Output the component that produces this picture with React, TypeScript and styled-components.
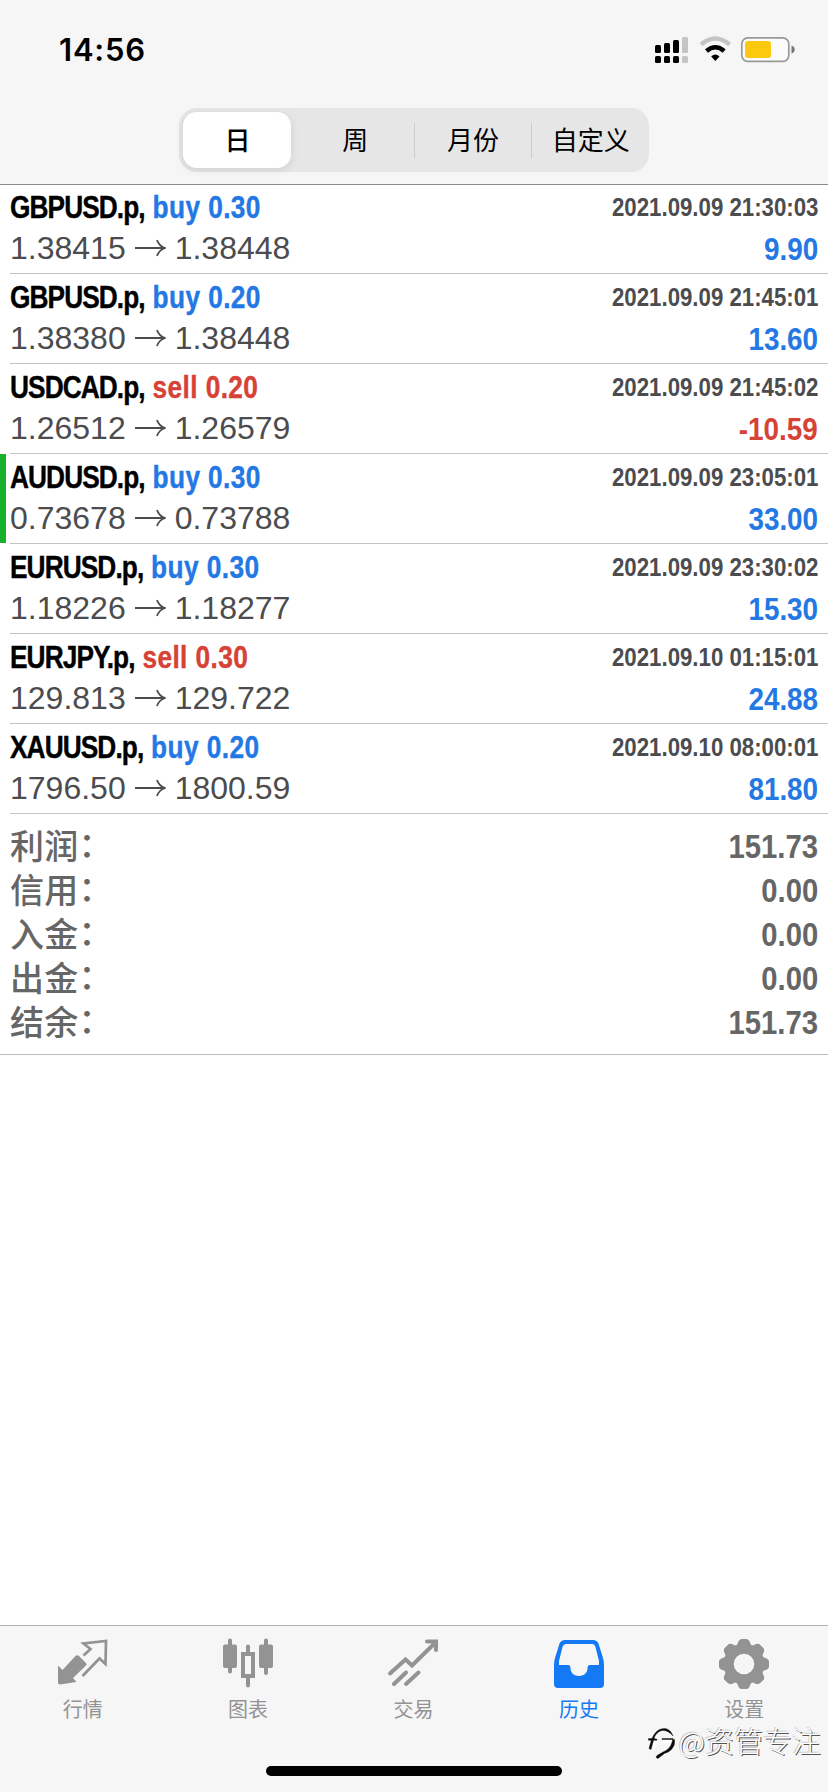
import React from 'react';
import styled, { createGlobalStyle } from 'styled-components';

const GlobalStyle = createGlobalStyle`
  * { box-sizing: border-box; }
  body { margin: 0; background: #fff; }
`;

const cjk = `"Noto Sans CJK SC", sans-serif`;
const sans = `"Liberation Sans", ${cjk}`;
const BLUE = '#2478e4';
const RED = '#d64236';

const Screen = styled.div`
  width: 828px;
  height: 1792px;
  display: flex;
  flex-direction: column;
  background: #fff;
  overflow: hidden;
  font-family: ${sans};
`;

const Header = styled.header`
  height: 184px;
  flex: none;
  display: flex;
  flex-direction: column;
  align-items: center;
  background: #f6f6f6;
  box-shadow: 0 1px 0 #8c8c8c;
  position: relative;
`;

const StatusBar = styled.div`
  width: 100%;
  height: 108px;
  flex: none;
  display: flex;
  justify-content: space-between;
  align-items: flex-start;
  padding: 30px 33px 0 59px;
`;

const Clock = styled.time`
  font: 600 31px/39px Inter, sans-serif;
  letter-spacing: 0.8px;
  color: #000;
`;

const StatusIcons = styled.svg`
  width: 142px;
  height: 30px;
  margin-top: 5px;
`;

const Segmented = styled.nav`
  width: 470px;
  height: 64px;
  flex: none;
  display: flex;
  align-items: center;
  padding: 4px 0 4px 4px;
  border-radius: 18px;
  background: #e6e6e7;
`;

const Segment = styled.button<{ $active?: boolean; $divided?: boolean }>`
  flex: ${p => (p.$active ? '0 0 108px' : '1 1 0')};
  height: ${p => (p.$active ? '56px' : '35px')};
  padding: 0 0 ${p => (p.$active ? '3px' : '5px')};
  margin-right: ${p => (p.$active ? '5px' : '0')};
  border: 0;
  border-left: 1px solid ${p => (p.$divided ? '#cbcbcd' : 'transparent')};
  border-radius: ${p => (p.$active ? '14px' : '0')};
  background: ${p => (p.$active ? '#fff' : 'transparent')};
  box-shadow: ${p => (p.$active ? '0 2px 8px rgba(0, 0, 0, 0.1)' : 'none')};
  font: ${p => (p.$active ? 500 : 400)} 26px/32px ${cjk};
  color: #000;
  white-space: nowrap;
`;

const Deals = styled.main`
  flex: none;
`;

const Deal = styled.article<{ $closedByTarget?: boolean }>`
  height: 90px;
  display: flex;
  justify-content: space-between;
  padding: 5px 10px 0;
  background:
    linear-gradient(#c3c3c3, #c3c3c3) 10px 89px / 100% 1px no-repeat,
    linear-gradient(#17b12b, #17b12b) 0 0 / ${p => (p.$closedByTarget ? '6px 89px' : '0 0')} no-repeat;
`;

const DealSide = styled.div<{ $end?: boolean }>`
  display: flex;
  flex-direction: column;
  align-items: ${p => (p.$end ? 'flex-end' : 'flex-start')};
`;

const DealTitle = styled.div`
  height: 41px;
  display: flex;
  font: 700 32px/36px ${sans};
  -webkit-text-stroke: 0.4px currentColor;
  white-space: pre;
  transform: scaleX(0.82);
  transform-origin: left;
`;

const Symbol = styled.span`
  letter-spacing: -1.1px;
  color: #000;
`;

const Operation = styled.span<{ $color: string }>`
  margin-left: 9.5px;
  letter-spacing: 0.5px;
  color: ${p => p.$color};
  -webkit-text-stroke-color: ${p => p.$color};
`;

const Prices = styled.div`
  display: flex;
  align-items: center;
  font-size: 32px;
  line-height: 36px;
  color: #4c4c4e;
`;

const Arrow = styled.svg`
  width: 31px;
  height: 18px;
  margin: 0 9px;
`;

const DateTime = styled.time`
  height: 42px;
  font: 700 26px/36px ${sans};
  transform: scaleX(0.855);
  transform-origin: right;
  color: #4c4c4e;
`;

const Profit = styled.span<{ $color: string }>`
  font: 700 32px/36px ${sans};
  transform: scaleX(0.87);
  transform-origin: right;
  color: ${p => p.$color};
`;

const Summary = styled.dl`
  height: 241px;
  flex: none;
  margin: 0;
  padding: 9px 10px 0;
  border-bottom: 1px solid #bdbdbd;
`;

const SummaryRow = styled.div`
  height: 44px;
  display: flex;
  justify-content: space-between;
`;

const SummaryLabel = styled.dt`
  display: flex;
  font: 500 34px/44px ${cjk};
  letter-spacing: 0.2px;
  color: #666;
`;

const Colon = styled.span`
  margin: -2px 0 2px;
`;

const SummaryValue = styled.dd`
  margin: 0;
  font: 700 34px/46px ${sans};
  transform: scaleX(0.86);
  transform-origin: right;
  color: #666;
`;

const Footer = styled.footer`
  height: 167px;
  flex: none;
  margin-top: auto;
  position: relative;
  display: flex;
  flex-direction: column;
  align-items: center;
  justify-content: space-between;
  padding-bottom: 16px;
  border-top: 1px solid #b1b1b1;
  background: #f6f6f6;
`;

const Tabs = styled.nav`
  width: 100%;
  padding-right: 1px;
  display: grid;
  grid-template-columns: repeat(5, 1fr);
`;

const Tab = styled.a<{ $active?: boolean }>`
  display: flex;
  flex-direction: column;
  align-items: center;
  padding-top: 11px;
  color: ${p => (p.$active ? '#1479f5' : '#939393')};
  font: 400 20px/28px ${cjk};

  svg {
    width: 54px;
    height: 54px;
    margin-bottom: 4px;
  }
`;

const HomeIndicator = styled.div`
  width: 296px;
  height: 10px;
  border-radius: 5px;
  background: #000;
`;

const Watermark = styled.div`
  position: absolute;
  right: 7px;
  top: 94px;
  display: flex;
  align-items: center;
  font: 300 29px/40px ${cjk};
  color: #fff;
  text-shadow: 1px 1px 0 #555, -1px -1px 0 #ccc;

  svg {
    width: 28px;
    height: 34px;
    margin: 6px 3px 0 0;
  }
`;

const QuotesIcon = () => (
  <svg viewBox="0 0 54 54">
    <path fill="currentColor" d="M2 28.500 6.500 33 19 19.500Q21 17.500 23 19L30 26Q31 27.500 30 28.500L17 41 20.500 45 4 47.500Q2 47.500 2 45.500Z" />
    <path fill="none" stroke="currentColor" strokeWidth="2.700" d="M27.500 18.500 34.500 12 27.500 6.500 50 4 49.500 27 43.500 21.500 26.500 39" />
  </svg>
);

const ChartIcon = () => (
  <svg viewBox="0 0 54 54">
    <g fill="none" stroke="currentColor" strokeWidth="4" strokeLinecap="round">
      <path d="M9 3.500V34.500M45 3.500V36M27 9.500V17M27 41V48.500" />
      <rect x="22" y="17" width="10" height="22" />
    </g>
    <rect x="2" y="7.500" width="14" height="23.500" rx="2" fill="currentColor" />
    <rect x="38" y="7.500" width="14" height="23.500" rx="2" fill="currentColor" />
  </svg>
);

const TradeIcon = () => (
  <svg viewBox="0 0 54 54" fill="none" stroke="currentColor" strokeWidth="4" strokeLinecap="round">
    <path d="M4 36.500 19.500 22.500 26 28.500 49 6" />
    <path d="M41 4.500H50V13" />
    <path d="M8 47 20 35.500M20 47 32.500 35.500" />
  </svg>
);

const HistoryIcon = () => (
  <svg viewBox="0 0 54 54" fill="currentColor" fillRule="evenodd">
    <path d="M13 3H41Q45 3 46.500 6.500L51 21Q52 24 52 28V47Q52 51 48 51H6Q2 51 2 47V28Q2 24 3 21L7.500 6.500Q9 3 13 3ZM14 7Q11.500 7 10.500 10L7 24V28H16Q18.500 28 18.500 31C18.500 35 21 39 27 39S35.500 35 35.500 31Q35.500 28 38 28H47V24L43.500 10Q42.500 7 40 7Z" />
  </svg>
);

const SettingsIcon = () => (
  <svg viewBox="0 0 54 54">
    <g fill="currentColor">
      {[0, 45, 90, 135].map(angle => (
        <path
          key={angle}
          transform={`rotate(${angle} 27 27)`}
          d="M17.500 9Q20.500 8.500 21 5.500Q22 2 25 2H29Q32 2 33 5.500Q33.500 8.500 36.500 9V45Q33.500 45.500 33 48.500Q32 52 29 52H25Q22 52 21 48.500Q20.500 45.500 17.500 45Z"
        />
      ))}
    </g>
    <circle cx="27" cy="27" r="10.300" fill="#f6f6f6" />
  </svg>
);

const WatermarkLogo = () => (
  <svg viewBox="0 0 28 34" fill="none">
    <path stroke="#fff" strokeWidth="4" d="M3 15H10M10 9 5 22M10 7Q17 1 23 8M24 18Q20 27 10 30M15 15H25" />
    <g fill="#0a0a0a" stroke="#0a0a0a" strokeWidth="0.400">
      <path d="M0.500 12.500 4 12.500Q7 5 13 3Q19 1 23 6L25 10Q20 4 14 4.500Q8 6 6 12.500L9 13.200V14.200H5.500L3 23.500 1 22.500 3.300 14.200H0.500Z" />
      <path d="M26.500 13.500Q27.500 19 23.500 23.500Q20.500 26.500 16.500 27.500L10 32.500 8 31.500 9 29.500 15 26Q21 23.500 23 19Q24.500 16 24.500 13.500Z" />
      <path d="M14 12.500H25V13.500H14Z" />
    </g>
  </svg>
);

const deals = [
  { symbol: 'GBPUSD.p', side: 'buy', volume: '0.30', open: '1.38415', close: '1.38448', time: '2021.09.09 21:30:03', profit: '9.90' },
  { symbol: 'GBPUSD.p', side: 'buy', volume: '0.20', open: '1.38380', close: '1.38448', time: '2021.09.09 21:45:01', profit: '13.60' },
  { symbol: 'USDCAD.p', side: 'sell', volume: '0.20', open: '1.26512', close: '1.26579', time: '2021.09.09 21:45:02', profit: '-10.59' },
  { symbol: 'AUDUSD.p', side: 'buy', volume: '0.30', open: '0.73678', close: '0.73788', time: '2021.09.09 23:05:01', profit: '33.00', target: true },
  { symbol: 'EURUSD.p', side: 'buy', volume: '0.30', open: '1.18226', close: '1.18277', time: '2021.09.09 23:30:02', profit: '15.30' },
  { symbol: 'EURJPY.p', side: 'sell', volume: '0.30', open: '129.813', close: '129.722', time: '2021.09.10 01:15:01', profit: '24.88' },
  { symbol: 'XAUUSD.p', side: 'buy', volume: '0.20', open: '1796.50', close: '1800.59', time: '2021.09.10 08:00:01', profit: '81.80' },
];

const totals = [
  ['利润', '151.73'],
  ['信用', '0.00'],
  ['入金', '0.00'],
  ['出金', '0.00'],
  ['结余', '151.73'],
];

const tabs = [
  { label: '行情', Icon: QuotesIcon },
  { label: '图表', Icon: ChartIcon },
  { label: '交易', Icon: TradeIcon },
  { label: '历史', Icon: HistoryIcon, active: true },
  { label: '设置', Icon: SettingsIcon },
];

export default function App() {
  return (
    <Screen>
      <GlobalStyle />
      <Header>
        <StatusBar>
          <Clock>14:56</Clock>
          <StatusIcons viewBox="0 0 142 30">
            <g fill="#000">
              <rect x="2" y="10" width="6" height="8" rx="1.500" />
              <rect x="11" y="8" width="6" height="10" rx="1.500" />
              <rect x="20" y="5" width="6" height="13" rx="1.500" />
              <rect x="2" y="21" width="6" height="7" rx="1.500" />
              <rect x="11" y="21" width="6" height="7" rx="1.500" />
              <rect x="20" y="21" width="6" height="7" rx="1.500" />
            </g>
            <rect x="29" y="2" width="6" height="16" rx="1.500" fill="#c4c4c4" />
            <rect x="29" y="21" width="6" height="7" rx="1.500" fill="#c4c4c4" />
            <path d="M48 9.500Q62.300-2.500 76.600 9.500" fill="none" stroke="#c4c4c4" strokeWidth="4.500" />
            <path d="M53.500 16Q62.300 8.500 71.200 16" fill="none" stroke="#000" strokeWidth="4.500" />
            <path d="M58.200 21.500Q62.300 17.500 66.500 21.500L62.300 26Z" fill="#000" />
            <rect x="88.800" y="2.800" width="47" height="23.500" rx="6" fill="#fbfbfb" stroke="#999" strokeWidth="1.700" />
            <rect x="92" y="6" width="26" height="17" rx="3" fill="#fdc90f" />
            <path d="M138.500 10.500Q141.700 11.500 141.700 14.500T138.500 18.500Z" fill="#777" />
          </StatusIcons>
        </StatusBar>
        <Segmented>
          <Segment $active>日</Segment>
          <Segment>周</Segment>
          <Segment $divided>月份</Segment>
          <Segment $divided>自定义</Segment>
        </Segmented>
      </Header>

      <Deals>
        {deals.map(d => (
          <Deal key={d.time} $closedByTarget={d.target}>
            <DealSide>
              <DealTitle>
                <Symbol>{d.symbol},</Symbol>
                <Operation $color={d.side === 'buy' ? BLUE : RED}>{d.side} {d.volume}</Operation>
              </DealTitle>
              <Prices>
                {d.open}
                <Arrow viewBox="0 0 31 18" fill="none" stroke="currentColor" strokeWidth="1.800">
                  <path d="M0 9H29.500M22 1Q24 7 30 9Q24 11 22 17" />
                </Arrow>
                {d.close}
              </Prices>
            </DealSide>
            <DealSide $end>
              <DateTime>{d.time}</DateTime>
              <Profit $color={d.profit.startsWith('-') ? RED : BLUE}>{d.profit}</Profit>
            </DealSide>
          </Deal>
        ))}
      </Deals>

      <Summary>
        {totals.map(([label, value]) => (
          <SummaryRow key={label}>
            <SummaryLabel>
              {label}
              <Colon>：</Colon>
            </SummaryLabel>
            <SummaryValue>{value}</SummaryValue>
          </SummaryRow>
        ))}
      </Summary>

      <Footer>
        <Tabs>
          {tabs.map(({ label, Icon, active }) => (
            <Tab key={label} $active={active}>
              <Icon />
              {label}
            </Tab>
          ))}
        </Tabs>
        <HomeIndicator />
        <Watermark>
          <WatermarkLogo />
          @资管专注
        </Watermark>
      </Footer>
    </Screen>
  );
}
